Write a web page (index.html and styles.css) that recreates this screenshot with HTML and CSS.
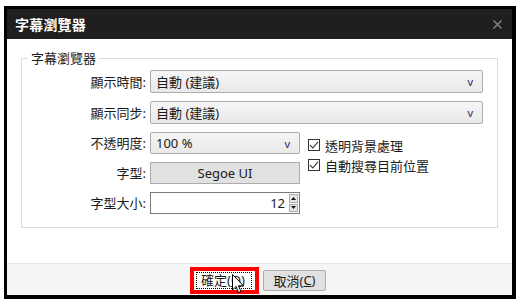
FILE: index.html
```html
<!DOCTYPE html>
<html lang="zh-Hant">
<head>
<meta charset="utf-8">
<title>字幕瀏覽器</title>
<link rel="stylesheet" href="styles.css">
</head>
<body>
<div class="window">
  <div class="titlebar">
    <span class="title">字幕瀏覽器</span>
    <svg class="close" width="9" height="9" viewBox="0 0 9 9"><path d="M0.5 0.5L8.5 8.5M8.5 0.5L0.5 8.5" stroke="#8a8a8a" stroke-width="1.2" fill="none"/></svg>
  </div>
  <div class="content">
    <fieldset class="group">
      <legend class="legend">字幕瀏覽器</legend>
      <div class="grid">
        <label class="lbl">顯示時間:</label>
        <div class="select wide"><span>自動 (建議)</span><span class="arrow">v</span></div>

        <label class="lbl">顯示同步:</label>
        <div class="select wide"><span>自動 (建議)</span><span class="arrow">v</span></div>

        <label class="lbl">不透明度:</label>
        <div class="select"><span>100 %</span><span class="arrow">v</span></div>
        <div class="checks">
          <div class="check"><span class="box"><svg width="10" height="10" viewBox="0 0 10 10"><path d="M1 5.2L3.8 8L9 1.8" stroke="#333" stroke-width="1.1" fill="none"/></svg></span><span>透明背景處理</span></div>
          <div class="check"><span class="box"><svg width="10" height="10" viewBox="0 0 10 10"><path d="M1 5.2L3.8 8L9 1.8" stroke="#333" stroke-width="1.1" fill="none"/></svg></span><span>自動搜尋目前位置</span></div>
        </div>

        <label class="lbl">字型:</label>
        <div class="fontbtn">Segoe UI</div>

        <label class="lbl">字型大小:</label>
        <div class="num">
          <span class="val">12</span>
          <div class="spin">
            <div class="sbtn"><svg width="7" height="4" viewBox="0 0 7 4"><path d="M0 4L3.5 0L7 4Z" fill="#111"/></svg></div>
            <div class="sbtn"><svg width="7" height="4" viewBox="0 0 7 4"><path d="M0 0L3.5 4L7 0Z" fill="#111"/></svg></div>
          </div>
        </div>
      </div>
    </fieldset>
  </div>
  <div class="footer">
    <div class="btn ok"><span class="focus">確定(<u>O</u>)</span>
      <svg class="cursor" width="13" height="20" viewBox="0 0 13 20"><path d="M0.5 0.5L0.5 16L4 12.5L6.5 18.5L9 17.5L6.5 11.8L11.5 11.8Z" fill="#fff" stroke="#000" stroke-width="1"/></svg>
    </div>
    <div class="btn">取消(<u>C</u>)</div>
  </div>
</div>
</body>
</html>
```

FILE: styles.css
```css
* { box-sizing: border-box; }

body {
  margin: 0;
  background: #fff;
  font-family: "Noto Sans", "Noto Sans CJK TC", sans-serif;
  font-size: 13px;
  color: #1b1b1b;
}

.window {
  margin: 6px 0 0 4px;
  width: 512px;
  height: 293px;
  border-style: solid;
  border-color: #000;
  border-width: 3px 4px 4px 3px;
  display: flex;
  flex-direction: column;
  background: #fff;
}

.titlebar {
  height: 30px;
  flex: none;
  background: #1f1f1f;
  color: #fff;
  display: flex;
  align-items: center;
  justify-content: space-between;
  padding: 0 10px 0 8px;
}

.title {
  font-size: 14px;
  font-weight: 600;
  letter-spacing: 0.2px;
}

.content {
  flex: 1;
  padding: 10px 14px 0 14px;
}

.group {
  margin: 0;
  padding: 3px 14px 13px 0;
  border: 1px solid #dcdcdc;
  min-width: 0;
}

.legend {
  margin-left: 6px;
  padding: 0 3px;
  line-height: 18px;
  font-size: 13px;
}

.grid {
  display: grid;
  grid-template-columns: 124px 150px 1fr;
  grid-template-rows: 23px 23px 22px 22px 22px;
  column-gap: 4px;
  row-gap: 8px;
}

.lbl {
  text-align: right;
  align-self: center;
  line-height: 18px;
}

.select {
  display: flex;
  align-items: center;
  justify-content: space-between;
  border: 1px solid #acacac;
  border-radius: 2px;
  background: linear-gradient(#f6f6f6, #e9e9e9);
  padding: 0 9px 0 5px;
}

.select.wide {
  grid-column: 2 / -1;
}

.arrow {
  font-size: 11px;
  color: #2a2a5a;
}

.checks {
  grid-column: 3;
  grid-row: 3 / span 2;
  padding-top: 3px;
  margin-left: 4px;
  display: flex;
  flex-direction: column;
}

.check {
  display: flex;
  align-items: center;
  gap: 5px;
  height: 20px;
}

.box {
  width: 12px;
  height: 12px;
  border: 1px solid #333;
  background: #fff;
  display: flex;
  align-items: center;
  justify-content: center;
}

.fontbtn {
  grid-column: 2;
  background: #e1e1e1;
  border: 1px solid #adadad;
  display: flex;
  align-items: center;
  justify-content: center;
}

.num {
  grid-column: 2;
  border: 1px solid #7a7a7a;
  display: flex;
  align-items: stretch;
  background: #fff;
}

.val {
  flex: 1;
  text-align: right;
  padding-right: 4px;
  align-self: center;
}

.spin {
  width: 9px;
  display: flex;
  flex-direction: column;
  gap: 1px;
  margin: 1px 1px 1px 0;
}

.sbtn {
  flex: 1;
  background: #e6e6e6;
  border: 1px solid #adadad;
  display: flex;
  align-items: center;
  justify-content: center;
}

.sbtn svg { width: 5px; height: 3px; }

.footer {
  flex: none;
  height: 32px;
  border-top: 1px solid #e3e3e3;
  background: #f5f5f5;
  display: flex;
  align-items: center;
  justify-content: center;
  gap: 7px;
  padding-top: 1px;
}

.btn {
  width: 63px;
  height: 21px;
  border: 1px solid #adadad;
  background: #e1e1e1;
  border-radius: 2px;
  display: flex;
  align-items: center;
  justify-content: center;
  font-size: 13px;
}

.btn u { text-decoration: underline; text-underline-offset: 1px; }

.btn.ok {
  position: relative;
  background: #fff;
  border-radius: 0;
  outline: 3px solid #f00;
  outline-offset: 0;
  border-color: #f00;
  justify-content: flex-start;
  padding-left: 2px;
}

.focus {
  border: 1px dotted #000;
  padding: 0 6px 0 4px;
  line-height: 15px;
}

.cursor {
  position: absolute;
  left: 38px;
  top: 3px;
}
```
